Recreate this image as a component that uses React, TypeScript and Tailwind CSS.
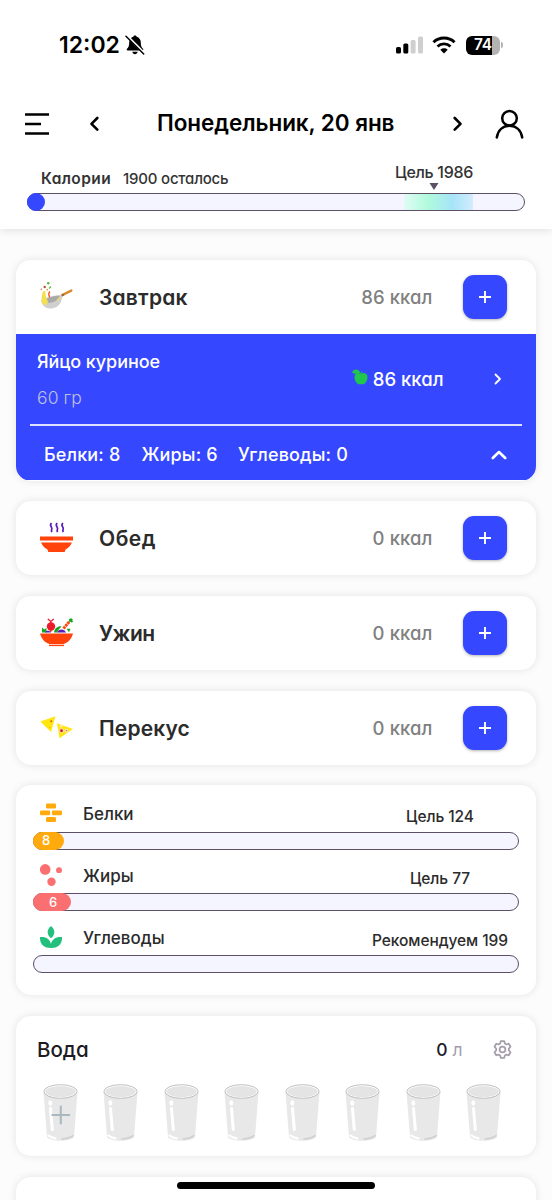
import React from "react";

type Meal = { name:string; kcal:string; icon:React.ReactNode; spacing:string };
type Macro = { name:string; goal:string; icon:React.ReactNode; fill?:React.ReactNode };

const PanIcon = () => (
  <svg width="34" height="34" viewBox="0 0 34 34" fill="none">
    <path d="M22 15.200 31.300 10.600" stroke="#d98a2b" strokeWidth="2.400" strokeLinecap="round"/>
    <path d="M21 16.200l3-1.600" stroke="#8a6a45" strokeWidth="1.600"/>
    <path d="M1 20.500C5 17.500 16 14 22 15.500c.3 3.500-1.200 9.500-6.500 12C9 30.300 2.200 27.500 1 20.500Z" fill="#cfcfcf"/>
    <path d="M4 20.300c4-3 12-5 16-4.600-1 3.300-4 5.800-8.500 6.800-3.500.7-6.500.3-7.500-2.200Z" fill="#a9a9a9"/>
    <path d="M1.500 21.500c-.3-3.500.7-7.500 1.200-9.500.7-1.500 2.900-1.200 2.900.5 0 3 .5 6 2.500 9l-1.800 3.500c-2.500.2-4.300-1.200-4.800-3.500Z" fill="#f3df52"/>
    <path d="M16.800 20l2.700-3.500.3 2.200-2.500 2.500Z" fill="#f3df52"/>
    <path d="M9.700 17.500c-1-2.500-2-4 .2-6" stroke="#f04e23" strokeWidth="1.300"/>
    <circle cx="4.700" cy="7" r="1.200" fill="#b4512b"/>
    <circle cx="1.300" cy="9.200" r=".7" fill="#e2574c"/>
    <circle cx="8.300" cy="3.300" r="1.300" fill="#5cb947"/>
    <path d="M9 8.500l2-2" stroke="#5cb947" strokeWidth="1.300"/>
    <circle cx="7.200" cy="9.700" r=".9" fill="#f2a33c"/>
  </svg>
);

const SoupIcon = () => (
  <svg width="34" height="34" viewBox="0 0 34 34" fill="none">
    <path d="M11.500 2c-3 3 1.500 4 .2 6.500-.7 1.300-.2 2 .2 2.700M17.200 2c-3 3 1.500 4 .2 6.500-.7 1.300-.2 2 .2 2.700M22.900 2c-3 3 1.500 4 .2 6.500-.7 1.300-.2 2 .2 2.700" stroke="#5a1cb8" strokeWidth="1.700"/>
    <path d="M0 15.500h33v4H0ZM1 21.500h31c-1.500 3.300-3.600 5.500-6.500 7L24.700 31H8.300l-.8-2.500C4.600 27 2.500 25 1 21.500Z" fill="#ff430a"/>
  </svg>
);

const SaladIcon = () => (
  <svg width="34" height="34" viewBox="0 0 34 34" fill="none">
    <path d="M2 16.500v-5l2.500 2 2-1.500v4.500ZM14 16.500c.5-4 3.500-6.500 7.500-6.200-1 1.500-3 3-4.500 6.200ZM26.500 12.800h4l-1.500 3.500Z" fill="#14a51e"/>
    <path d="M5 16.500c1-2.500 4.500-2.500 6 0ZM17 16.500c1.500-4 7.500-4 9 0Z" fill="#5a1cb8"/>
    <path d="M10.800 7.500V4.700M7.800 3l3 2.500L13.800 3M10.800 13v3" stroke="#ee1b2b" strokeWidth="1.300"/>
    <circle cx="11" cy="10.500" r="4.200" fill="#ee1b2b"/>
    <path d="M23.500 12.500l6-7" stroke="#ff430a" strokeWidth="3" strokeDasharray="2.500 .6"/>
    <path d="M29.200 5.500l3-2.500M29.500 3l3 3" stroke="#14a51e" strokeWidth="2"/>
    <path d="M0 17.500h33c-1.500 5.500-4.700 9-9.300 10.500H9.300C4.700 26.500 1.500 23 0 17.500Z" fill="#ff430a"/>
    <path d="M9 29.400h15" stroke="#ff430a" strokeWidth="1.400"/>
  </svg>
);

const NachosIcon = () => (
  <svg width="34" height="34" viewBox="0 0 34 34" fill="none">
    <path d="M.3 10.500 15.500 5.300 11 21Z" fill="#ffe60f"/>
    <path d="M17 12.200 32.800 18 19.500 27.300Z" fill="#ffe60f"/>
    <circle cx="11.200" cy="10.300" r="1" fill="#e05a17"/>
    <circle cx="9.700" cy="16.300" r=".6" fill="#f09a16"/>
    <circle cx="21.500" cy="19.700" r="2.400" fill="#ffd9b0"/>
    <circle cx="21.500" cy="19.700" r="1.400" fill="#d8132b"/>
    <circle cx="26.600" cy="19.600" r="1.900" fill="#ffe4c0"/>
    <circle cx="26.600" cy="19.600" r=".7" fill="#e2574c"/>
    <circle cx="21.200" cy="15.300" r="1.300" fill="#fff2a8"/>
  </svg>
);

const ProteinIcon = () => (
  <svg width="22" height="22" viewBox="0 0 22 22" fill="#ffab0d">
    <rect x="6" y="1.500" width="10" height="5" rx="1.300"/>
    <rect x="0" y="8.500" width="10.200" height="4.700" rx="1.300"/>
    <rect x="11.900" y="8.500" width="10.100" height="4.700" rx="1.300"/>
    <rect x="6" y="15.100" width="10" height="4.900" rx="1.300"/>
  </svg>
);

const FatIcon = () => (
  <svg width="22" height="22" viewBox="0 0 22 22" fill="#fa7070">
    <circle cx="5.200" cy="5.400" r="5.300"/>
    <circle cx="19" cy="6.200" r="2.900"/>
    <circle cx="11.500" cy="17.700" r="4.200"/>
  </svg>
);

const CarbIcon = () => (
  <svg width="22" height="22" viewBox="0 0 22 22" fill="#22c07c">
    <path d="M11 0c2.300 2 3.300 4 3.300 6.200S13 10.500 11 12.300C9 10.500 7.700 8.400 7.700 6.200S8.700 2 11 0Z"/>
    <path d="M0 11c6-.7 10 2 11 7 1-5 5-7.700 11-7 .3 7-3.500 11-11 11S-.3 18 0 11Z"/>
  </svg>
);

const Chevron = ({d, w, h, sw}:{d:string; w:number; h:number; sw:number}) => (
  <svg width={w} height={h} viewBox={`0 0 ${w} ${h}`} fill="none" className="shrink-0">
    <path d={d} stroke="currentColor" strokeWidth={sw} strokeLinecap="round" strokeLinejoin="round"/>
  </svg>
);

const AddButton = () => (
  <button className="flex h-[44px] w-[44px] items-center justify-center rounded-[11px] bg-[#3547ff] shadow-[0_1px_3px_rgba(0,0,0,0.3)]">
    <svg width="12" height="12" viewBox="0 0 12 12"><path d="M6 0v12M0 6h12" stroke="#fff" strokeWidth="1.900"/></svg>
  </button>
);

const MealRow = ({meal}:{meal:Meal}) => (
  <div className="flex h-[74.200px] items-center pl-[23.500px] pr-[29.500px]">
    <div className="w-[59.500px]">{meal.icon}</div>
    <span className={`pt-px text-[21px] font-semibold leading-none text-[#2b2b2b] ${meal.spacing}`}>{meal.name}</span>
    <span className="ml-auto mr-[30px] pt-px text-[18.500px] font-medium leading-none tracking-[0.100px] text-[#808080]">{meal.kcal}</span>
    <AddButton/>
  </div>
);

const Glass = ({plus}:{plus:boolean}) => (
  <svg width="35" height="58" viewBox="0 0 35 58" fill="none">
    <path d="M.5 8 4 53c3 5 24 5 27 0L34.500 8Z" fill="#e8e8e8"/>
    <ellipse cx="17.500" cy="7.500" rx="16.600" ry="6.800" fill="#fff" stroke="#bfbfbf" strokeWidth="1"/>
    <ellipse cx="17.500" cy="7.600" rx="15.200" ry="5.600" fill="#e4e4e4"/>
    <ellipse cx="7.300" cy="19" rx="2" ry="2.700" fill="#fff"/>
    <path d="M7.500 24.500l1.800 21" stroke="#fff" strokeWidth="3" strokeLinecap="round"/>
    <path d="M5.500 51.500c2 1.800 4 2.400 7 2.800" stroke="#fff" strokeWidth="2.200" strokeLinecap="round"/>
    <path d="M19 55c5-.2 8-1.200 11-3.300" stroke="#cfcfcf" strokeWidth="1.600" strokeLinecap="round"/>
    {plus && <path d="M17.800 22.500v17M9.300 31h17" stroke="#a9b8bf" strokeWidth="2" strokeLinecap="round"/>}
  </svg>
);

const card = "rounded-[15px] bg-white shadow-[0_0_8px_rgba(0,0,0,0.1)]";

const breakfast: Meal = { name:"Завтрак", kcal:"86 ккал", icon:<PanIcon/>, spacing:"tracking-[0.200px]" };

const meals: Meal[] = [
  { name:"Обед", kcal:"0 ккал", icon:<SoupIcon/>, spacing:"tracking-[0.500px]" },
  { name:"Ужин", kcal:"0 ккал", icon:<SaladIcon/>, spacing:"tracking-[-0.500px]" },
  { name:"Перекус", kcal:"0 ккал", icon:<NachosIcon/>, spacing:"tracking-[0.150px]" },
];

const macros: Macro[] = [
  {
    name:"Белки", goal:"Цель 124", icon:<ProteinIcon/>,
    fill:<div className="flex h-[18px] w-[31px] items-center rounded-[9px] bg-[#ffab0d] pl-[9px] text-[13px] font-medium text-white">8</div>
  },
  {
    name:"Жиры", goal:"Цель 77", icon:<FatIcon/>,
    fill:<div className="flex h-[18px] w-[38px] items-center rounded-[9px] bg-[#fa7070] pl-[16px] text-[13px] font-medium text-white">6</div>
  },
  { name:"Углеводы", goal:"Рекомендуем 199", icon:<CarbIcon/> },
];

const StatusBar = () => (
  <div className="flex h-[90px] items-center pl-[59px] pr-[49px]">
    <span className="text-[23px] font-semibold leading-none">12:02</span>
    <svg width="20" height="20" viewBox="0 0 20 20" className="ml-[5px]">
      <path d="M10 .500c.8 0 1.500.5 1.700 1.200 2.600.8 4.100 3 4.100 5.700 0 3.500.8 4.900 2.200 6.300.6.700.3 1.800-.8 1.800H2.800c-1.100 0-1.400-1.100-.8-1.800C3.400 12.300 4.200 10.900 4.200 7.400c0-2.700 1.500-4.900 4.100-5.700C8.500 1 9.200.500 10 .500ZM7.300 16.800h5.400c-.3 1.600-1.300 2.400-2.700 2.400s-2.400-.8-2.700-2.400Z"/>
      <path d="M2.300 1.200 19.300 18.300" stroke="#fff" strokeWidth="2.400"/>
      <path d="M1 1.300 18.700 19" stroke="#000" strokeWidth="1.500" strokeLinecap="round"/>
    </svg>
    <svg width="28" height="18" viewBox="0 0 28 18" className="ml-auto">
      <rect x="0" y="11" width="5" height="6.500" rx="1.500"/>
      <rect x="7.300" y="7.500" width="5" height="10" rx="1.500"/>
      <rect x="14.600" y="4" width="5" height="13.500" rx="1.500" fill="#cfcfcf"/>
      <rect x="22" y=".5" width="5" height="17" rx="1.500" fill="#cfcfcf"/>
    </svg>
    <svg width="24" height="18" viewBox="0 0 24 18" className="ml-[8px]" fill="none">
      <path d="M1.500 6.300C7.200.7 16.800.7 22.500 6.300" stroke="#000" strokeWidth="3"/>
      <path d="M5.500 10.400c3.600-3.400 9.400-3.400 13 0" stroke="#000" strokeWidth="2.800"/>
      <path d="M12 17.500 8.300 13.700c2.200-1.900 5.200-1.900 7.400 0Z" fill="#000"/>
    </svg>
    <div className="ml-[10px] flex h-[19px] w-[34px] items-center justify-center overflow-hidden rounded-[6px] bg-[linear-gradient(90deg,#000_76%,#b3b3b3_76%)] text-[15.500px] font-semibold leading-none tracking-[-0.300px] text-white">74</div>
    <div className="ml-[1px] h-[6px] w-[2px] rounded-r-full bg-[#b3b3b3]"/>
  </div>
);

export default function App(){
  return (
    <div className="relative h-[1200px] w-[552px] overflow-hidden bg-[#fcfcfc] font-['Inter','Open_Sans',sans-serif] [font-feature-settings:'cv11']">
      <header className="h-[229px] bg-white text-black shadow-[0_2px_8px_rgba(0,0,0,0.1)]">
        <StatusBar/>
        <div className="flex h-[67px] items-center pl-[25px] pr-[28px]">
          <svg width="24" height="24" viewBox="0 0 24 24"><path d="M0 2.500h24M0 12h16M0 21.500h24" stroke="#000" strokeWidth="2.400"/></svg>
          <div className="ml-[41px]"><Chevron w={9} h={15} sw={2.6} d="M7.300 2 1.500 7.800l5.800 5.800"/></div>
          <h1 className="ml-[58px] w-[240px] whitespace-nowrap text-[22.500px] font-semibold leading-none tracking-[-0.070px]">Понедельник, 20 янв</h1>
          <div className="ml-[55.500px]"><Chevron w={9} h={15} sw={2.6} d="M1.700 2l5.800 5.800-5.800 5.800"/></div>
          <svg width="29" height="30" viewBox="0 0 29 30" className="ml-auto" fill="none">
            <circle cx="14.500" cy="9.300" r="7.300" stroke="#000" strokeWidth="2.500"/>
            <path d="M1.800 28.500C3 21 8 16.800 14.500 16.800S26 21 27.200 28.500" stroke="#000" strokeWidth="2.500" strokeLinecap="round"/>
          </svg>
        </div>
        <div className="flex h-[36px] pl-[41px] text-[#333]">
          <span className="mt-[14px] w-[82px] text-[15.500px] font-semibold leading-none tracking-[0.400px]">Калории</span>
          <span className="mt-[14px] text-[15px] font-medium leading-none tracking-[-0.200px]">1900 осталось</span>
          <div className="ml-auto mr-[68px] flex w-[100px] flex-col items-center whitespace-nowrap">
            <span className="mt-[7px] text-[16px] font-medium leading-none tracking-[-0.300px]">Цель 1986</span>
            <svg width="10" height="7" viewBox="0 0 10 7" className="mt-[3px]"><path d="M.5 0h9L5 7Z" fill="#5b5066"/></svg>
          </div>
        </div>
        <div className="ml-[27px] flex h-[18px] w-[498px] items-stretch rounded-[9px] border-[1.300px] border-[#5b5066] bg-[#f5f5ff]">
          <div className="-my-px -ml-px w-[18px] rounded-full bg-[#3547ff]"/>
          <div className="ml-[359px] w-[69px] bg-[linear-gradient(90deg,#e0fbf5,#b0fadc_35%,#a6e4f9_70%,#d2ecfc)]"/>
        </div>
      </header>

      <main className="flex flex-col gap-[20.600px] px-[16px] pt-[30.500px]">
        <section className={`${card} h-[221px] overflow-hidden`}>
          <MealRow meal={breakfast}/>
          <div className="h-[146.800px] bg-[#3547ff] text-white">
            <div className="flex h-[90.500px] items-center pl-[21px] pr-[34.500px]">
              <div className="flex flex-col gap-[18px] pt-[2px]">
                <span className="text-[18px] font-medium leading-none tracking-[-0.080px]">Яйцо куриное</span>
                <span className="text-[17.500px] font-light leading-none tracking-[0.100px] text-[#c0c2dc]">60 гр</span>
              </div>
              <svg width="16" height="16" viewBox="0 0 16 16" className="mb-[4px] ml-auto" fill="#1fc74d">
                <path d="M0 3.300C2-.300 6.500-.500 8.500 4 5 5.500 2 5.300 0 3.300Z"/>
                <path d="M8.800 5c2-1.500 6.500-1.500 6.700 3 .1 4-2.800 7.800-5.200 7.300-.6-.2-1.200-.2-1.800 0C5.500 16 2.200 11.500 2.500 8 2.800 4.500 6 3.500 8.800 5Z"/>
                <path d="M8.500 5 10 2.500" stroke="#1fc74d"/>
              </svg>
              <span className="ml-[5px] mr-[50px] text-[18.500px] font-medium leading-none">86 ккал</span>
              <Chevron w={8} h={12} sw={1.8} d="M1.500 1.500 6 6l-4.500 4.500"/>
            </div>
            <div className="mx-[14px] h-[1.500px] bg-[#dfe2ff]"/>
            <div className="flex h-[56px] items-center pl-[28px] pr-[29.500px] pt-[3px] text-[18px] font-medium leading-none tracking-[0.150px]">
              <span className="w-[97.500px]">Белки: 8</span>
              <span className="w-[96.500px]">Жиры: 6</span>
              <span>Углеводы: 0</span>
              <div className="ml-auto"><Chevron w={16} h={10} sw={2.6} d="M1.800 8 8 2l6.200 6"/></div>
            </div>
          </div>
        </section>

        {meals.map((m)=> (
          <section key={m.name} className={card}><MealRow meal={m}/></section>
        ))}

        <section className={`${card} h-[209.500px] px-[17px] pt-[17px]`}>
          {macros.map((m)=> (
            <div key={m.name} className="h-[61.800px] text-[#2b2b2b]">
              <div className="flex h-[29.200px] items-start pl-[7px]">
                {m.icon}
                <span className="ml-[21px] mt-[4px] text-[17px] font-medium leading-none">{m.name}</span>
                <span className="ml-auto mr-[9px] mt-[7px] w-[140px] whitespace-nowrap text-center text-[15.500px] font-medium leading-none tracking-[-0.080px]">{m.goal}</span>
              </div>
              <div className="h-[18px] rounded-[9px] border-[1.300px] border-[#5b5066] bg-[#f5f5ff]">
                <div className="-ml-px -mt-px">{m.fill}</div>
              </div>
            </div>
          ))}
        </section>

        <section className={`${card} h-[140.800px]`}>
          <div className="flex h-[68px] items-center pl-[21px] pr-[24.500px]">
            <span className="pt-[2px] text-[20.500px] font-medium leading-none text-[#1d1b20]">Вода</span>
            <span className="ml-auto text-[17.500px] font-medium leading-none text-[#1d1b2c]">0</span>
            <span className="ml-[5px] mr-[30px] text-[17.500px] leading-none text-[#a59dac]">л</span>
            <svg width="19" height="19" viewBox="0 0 24 24" fill="none" stroke="#a59dac" strokeWidth="2.200" strokeLinejoin="round">
              <path d="M9.800 1.500h4.400l.8 3 1.900 1.100 3-.9 2.200 3.800L20 10.800v2.400l2.100 2.300-2.200 3.800-3-.9-1.900 1.100-.8 3H9.800l-.8-3-1.900-1.100-3 .9-2.200-3.800L4 13.200v-2.400L1.900 8.500l2.200-3.800 3 .9L9 4.500Z"/>
              <circle cx="12" cy="12" r="3.700"/>
            </svg>
          </div>
          <div className="flex justify-between pl-[27px] pr-[35px]">
            {[0,1,2,3,4,5,6,7].map((n)=> <Glass key={n} plus={n === 0}/>)}
          </div>
        </section>

        <section className={`${card} h-[60px]`}/>
      </main>

      <div className="absolute bottom-[11.500px] left-[177px] h-[6.500px] w-[198px] rounded-full bg-black"/>
    </div>
  );
}
